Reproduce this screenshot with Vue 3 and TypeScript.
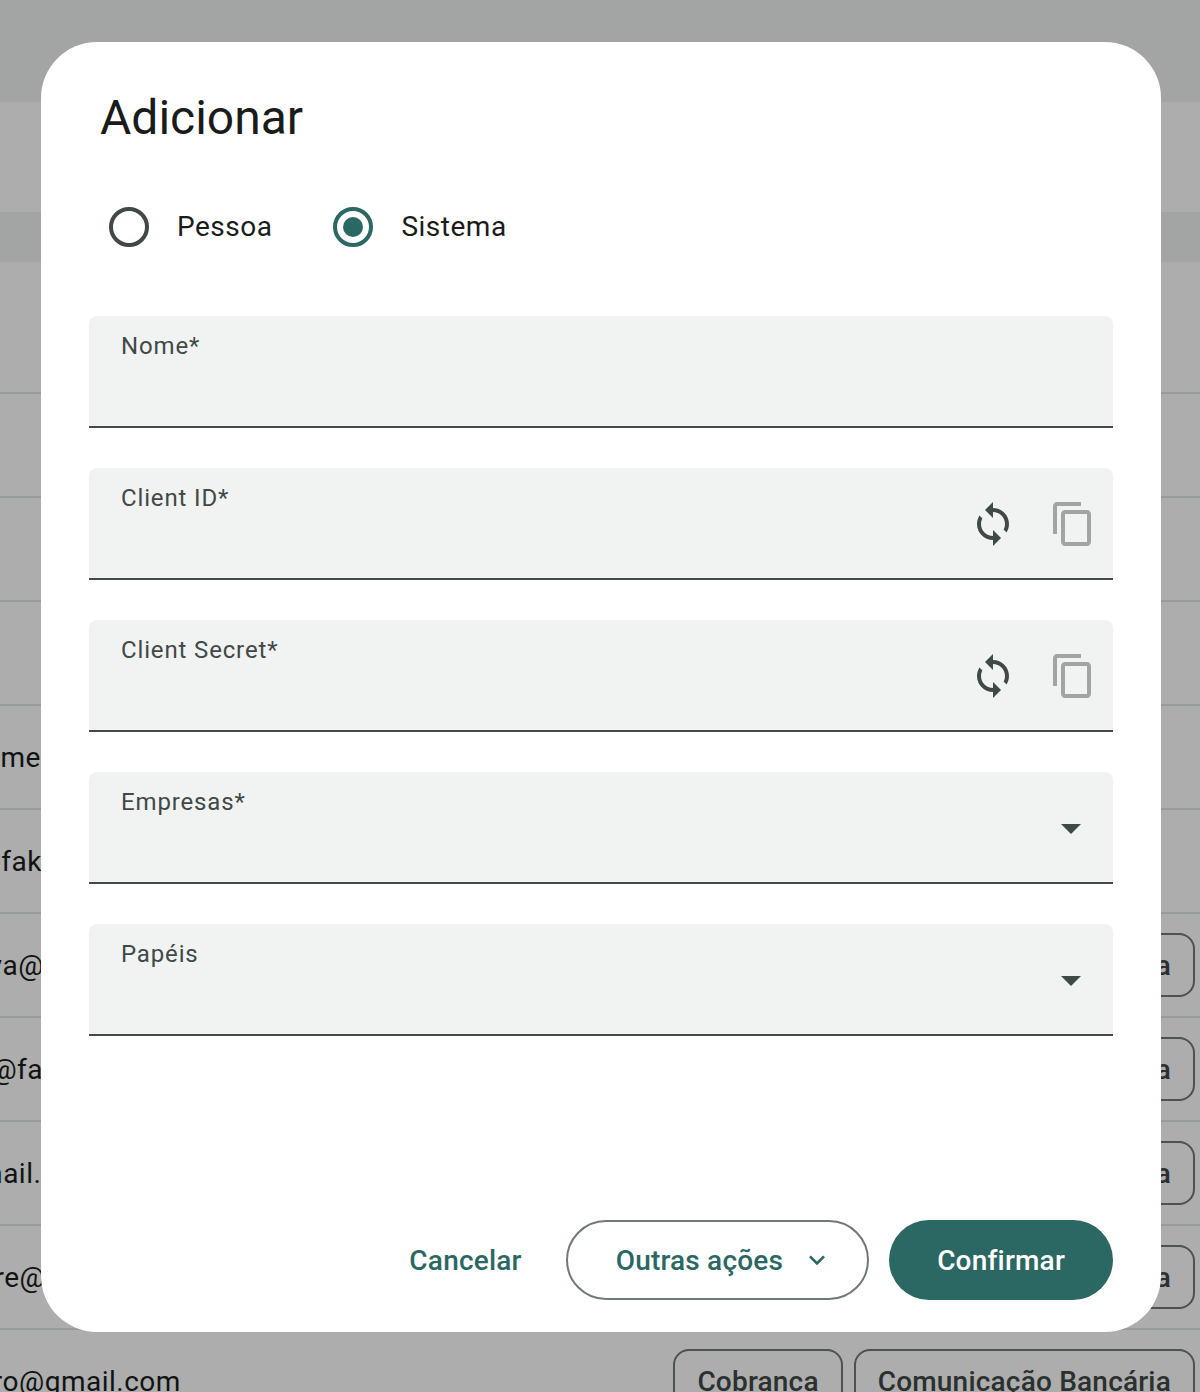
<script setup lang="ts">
interface Row {
  email: string;
  offset: number;
  chips: string[];
}

const rows: Row[] = [
  { email: "", offset: 0, chips: [] },
  { email: "", offset: 0, chips: [] },
  { email: "", offset: 0, chips: [] },
  { email: "", offset: 0, chips: [] },
  { email: "nome", offset: -32, chips: [] },
  { email: "a@fake", offset: -40, chips: [] },
  { email: "silva@fake.com", offset: -41, chips: ["Cobranca"] },
  { email: "ana@fake.com", offset: -56, chips: ["Cobranca"] },
  { email: "user@gmail.com", offset: -120, chips: ["Cobranca"] },
  { email: "pire@gmail.com", offset: -29, chips: ["Cobranca"] },
  { email: "pedro@gmail.com", offset: -55, chips: ["Cobranca", "Comunicação Bancária"] },
];
</script>

<template>
  <div class="page">
    <div class="topbar"></div>
    <div class="toolbar"></div>
    <div class="thead"></div>
    <div class="firstrow"></div>
    <div v-for="(row, i) in rows" :key="i" class="row">
      <span class="email" :style="{ marginLeft: row.offset + 'px' }">{{ row.email }}</span>
      <div class="chips">
        <span v-for="chip in row.chips" :key="chip" class="chip">{{ chip }}</span>
      </div>
    </div>

    <div class="scrim"></div>

    <div class="dialog">
      <h2 class="title">Adicionar</h2>

      <div class="radios">
        <label class="radio">
          <span class="circle"></span>
          <span class="radio-text">Pessoa</span>
        </label>
        <label class="radio">
          <span class="circle checked"></span>
          <span class="radio-text">Sistema</span>
        </label>
      </div>

      <div class="fields">
        <div class="field">
          <span class="label">Nome*</span>
        </div>

        <div class="field">
          <span class="label">Client ID*</span>
          <div class="icons">
            <svg class="icon" viewBox="0 0 24 24" width="48" height="48">
              <path d="M12 4V1L8 5l4 4V6c3.31 0 6 2.69 6 6 0 1.01-.25 1.97-.7 2.8l1.46 1.46C19.54 15.03 20 13.57 20 12c0-4.42-3.58-8-8-8zm0 14c-3.31 0-6-2.69-6-6 0-1.01.25-1.97.7-2.8L5.24 7.74C4.46 8.97 4 10.43 4 12c0 4.42 3.58 8 8 8v3l4-4-4-4v3z" />
            </svg>
            <svg class="icon muted" viewBox="0 0 24 24" width="48" height="48">
              <path d="M16 1H4c-1.1 0-2 .9-2 2v14h2V3h12V1zm3 4H8c-1.1 0-2 .9-2 2v14c0 1.1.9 2 2 2h11c1.1 0 2-.9 2-2V7c0-1.1-.9-2-2-2zm0 16H8V7h11v14z" />
            </svg>
          </div>
        </div>

        <div class="field">
          <span class="label">Client Secret*</span>
          <div class="icons">
            <svg class="icon" viewBox="0 0 24 24" width="48" height="48">
              <path d="M12 4V1L8 5l4 4V6c3.31 0 6 2.69 6 6 0 1.01-.25 1.97-.7 2.8l1.46 1.46C19.54 15.03 20 13.57 20 12c0-4.42-3.58-8-8-8zm0 14c-3.31 0-6-2.69-6-6 0-1.01.25-1.97.7-2.8L5.24 7.74C4.46 8.97 4 10.43 4 12c0 4.42 3.58 8 8 8v3l4-4-4-4v3z" />
            </svg>
            <svg class="icon muted" viewBox="0 0 24 24" width="48" height="48">
              <path d="M16 1H4c-1.1 0-2 .9-2 2v14h2V3h12V1zm3 4H8c-1.1 0-2 .9-2 2v14c0 1.1.9 2 2 2h11c1.1 0 2-.9 2-2V7c0-1.1-.9-2-2-2zm0 16H8V7h11v14z" />
            </svg>
          </div>
        </div>

        <div class="field">
          <span class="label">Empresas*</span>
          <div class="icons dropdown">
            <svg class="icon" viewBox="0 0 24 24" width="48" height="48">
              <path d="M7 10l5 5 5-5z" />
            </svg>
          </div>
        </div>

        <div class="field">
          <span class="label">Papéis</span>
          <div class="icons dropdown">
            <svg class="icon" viewBox="0 0 24 24" width="48" height="48">
              <path d="M7 10l5 5 5-5z" />
            </svg>
          </div>
        </div>
      </div>

      <div class="actions">
        <button class="btn text">Cancelar</button>
        <button class="btn outlined">
          Outras ações
          <svg class="chevron" viewBox="0 0 24 24" width="32" height="32">
            <path d="M16.59 8.59L12 13.17 7.41 8.59 6 10l6 6 6-6z" />
          </svg>
        </button>
        <button class="btn filled">Confirmar</button>
      </div>
    </div>
  </div>
</template>

<style>
html,
body {
  margin: 0;
  background: #fff;
}
</style>

<style scoped>
.page {
  position: relative;
  width: 1200px;
  height: 1392px;
  overflow: hidden;
  background: #fff;
  font-family: Roboto, "Liberation Sans", sans-serif;
  color: #191c1b;
}

.topbar {
  height: 102px;
  background: #f1f3f2;
}

.toolbar {
  height: 110px;
}

.thead {
  height: 50px;
  background: #f1f3f2;
}

.firstrow {
  height: 28px;
}

.row {
  display: flex;
  align-items: center;
  justify-content: space-between;
  height: 102px;
  border-bottom: 2px solid #dfe5e2;
  font-size: 28px;
  letter-spacing: 0.5px;
}

.email {
  white-space: nowrap;
}

.chips {
  display: flex;
  gap: 11px;
  margin-right: 5px;
}

.chip {
  display: flex;
  align-items: center;
  box-sizing: border-box;
  height: 64px;
  padding: 0 22px;
  border: 2px solid #6f7975;
  border-radius: 16px;
  font-size: 28px;
  font-weight: 500;
  letter-spacing: 0.2px;
  color: #404946;
  white-space: nowrap;
}

.scrim {
  position: absolute;
  inset: 0;
  background: rgba(0, 0, 0, 0.32);
}

.dialog {
  position: absolute;
  top: 42px;
  left: 41px;
  display: flex;
  flex-direction: column;
  box-sizing: border-box;
  width: 1120px;
  height: 1290px;
  padding: 48px;
  background: #fff;
  border-radius: 56px;
}

.title {
  margin: 0 0 0 11px;
  font-size: 48px;
  font-weight: 400;
  line-height: 56px;
  color: #191c1b;
}

.radios {
  display: flex;
  gap: 61px;
  margin: 56px 0 0 20px;
}

.radio {
  display: flex;
  align-items: center;
  gap: 28px;
  height: 50px;
  font-size: 28px;
  letter-spacing: 0.5px;
  color: #191c1b;
}

.radio-text {
  margin-top: -2px;
}

.circle {
  box-sizing: border-box;
  width: 40px;
  height: 40px;
  border: 4px solid #404946;
  border-radius: 50%;
}

.circle.checked {
  position: relative;
  border-color: #2c6863;
}

.circle.checked::after {
  content: "";
  position: absolute;
  inset: 6px;
  background: #2c6863;
  border-radius: 50%;
}

.fields {
  display: flex;
  flex-direction: column;
  gap: 40px;
  margin-top: 64px;
}

.field {
  position: relative;
  display: flex;
  justify-content: space-between;
  align-items: center;
  box-sizing: border-box;
  height: 112px;
  padding: 0 16px 0 32px;
  background: #f1f3f2;
  border-bottom: 2px solid #404946;
  border-radius: 8px 8px 0 0;
}

.label {
  align-self: flex-start;
  margin-top: 16px;
  font-size: 24px;
  line-height: 28px;
  letter-spacing: 0.85px;
  color: #404946;
}

.icons {
  display: flex;
  gap: 32px;
  margin-top: 2px;
}

.icons.dropdown {
  margin-right: 2px;
}

.icon {
  display: block;
  fill: #404946;
}

.icon.muted {
  fill: #a1a4a3;
}

.actions {
  display: flex;
  justify-content: flex-end;
  align-items: center;
  gap: 20px;
  margin-top: auto;
  margin-bottom: -16px;
}

.btn {
  display: flex;
  align-items: center;
  box-sizing: border-box;
  height: 80px;
  padding: 0 48px;
  font-family: inherit;
  font-size: 28px;
  font-weight: 500;
  letter-spacing: 0.2px;
  border-radius: 40px;
  border: none;
  background: none;
  color: #2c6863;
}

.btn.text {
  padding: 0 24px;
}

.btn.outlined {
  gap: 18px;
  padding-right: 34px;
  border: 2px solid #707975;
}

.btn.filled {
  background: #2c6863;
  color: #fff;
}

.chevron {
  fill: #2c6863;
}
</style>
